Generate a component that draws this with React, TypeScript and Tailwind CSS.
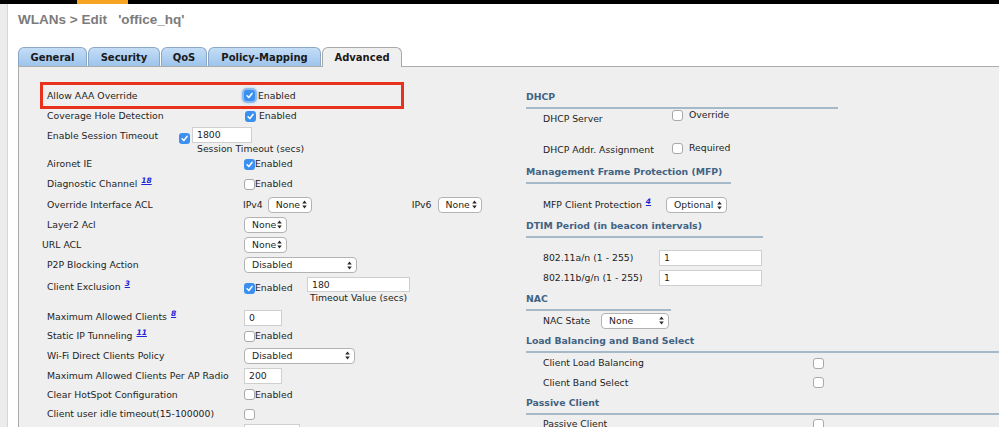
import React from "react";

function Check({ on, focus }: { on?: boolean; focus?: boolean }) {
  if (on) {
    return (
      <span
        className={
          focus
            ? "inline-flex w-[11px] h-[11px] shrink-0 items-center justify-center rounded-[3px] bg-[#3b8ff0] shadow-[0_0_0_2px_#8db8ee,0_0_3px_2px_#a9c9f2]"
            : "inline-flex w-[11px] h-[11px] shrink-0 items-center justify-center rounded-[3px] bg-[#3b8ff0]"
        }
      >
        <svg width="9" height="9" viewBox="0 0 10 10">
          <path d="M2.3 5.3 L4.3 7.3 L7.8 2.7" stroke="white" strokeWidth="1.7" fill="none" strokeLinecap="round" strokeLinejoin="round" />
        </svg>
      </span>
    );
  }
  return <span className="inline-block w-[11px] h-[11px] shrink-0 rounded-[3px] bg-white border border-[#a9a9a9]" />;
}

function Arrows() {
  return (
    <svg width="5" height="9" viewBox="0 0 5 9" className="shrink-0">
      <path d="M2.5 0.6 L4.8 3.6 H0.2 Z M2.5 8.4 L4.8 5.4 H0.2 Z" fill="#2a2a2a" />
    </svg>
  );
}

function Select({ value, cls }: { value: string; cls: string }) {
  return (
    <div className={cls + " h-[16px] rounded-[4px] border border-[#b3b3b3] bg-white flex items-center justify-between pl-[7px] pr-[4px] shrink-0"}>
      <span className="leading-none">{value}</span>
      <Arrows />
    </div>
  );
}

function Input({ value, cls }: { value: string; cls: string }) {
  return (
    <div className={cls + " bg-white border border-[#cfcfcf] flex items-center pl-[4px] shrink-0 leading-none"}>{value}</div>
  );
}

function Sup({ n }: { n: string }) {
  return <span className="ml-[4px] text-[7.5px] font-bold italic underline text-[#2323d8] align-super leading-none">{n}</span>;
}

function Row({ h, label, sup, children, url }: { h: string; label: string; sup?: string; children?: React.ReactNode; url?: boolean }) {
  return (
    <div className={h + " shrink-0 flex items-center " + (url ? "pl-[2px]" : "pl-[7px]")}>
      <div className={url ? "w-[202px] shrink-0" : "w-[197px] shrink-0"}>
        {label}
        {sup ? <Sup n={sup} /> : null}
      </div>
      <div className="flex items-center">{children}</div>
    </div>
  );
}

function Head({ cls, children }: { cls: string; children: React.ReactNode }) {
  return (
    <div className={cls + " h-[23px] shrink-0 border-b-2 border-[#a6b9c8] flex items-center font-bold text-[#3f6383]"}>{children}</div>
  );
}

export default function App() {
  return (
    <div className="w-[999px] h-[427px] overflow-hidden bg-white flex flex-col font-['DejaVu_Sans',sans-serif] text-[9.3px] text-[#1e1e1e]">
      <div className="h-[4px] bg-black flex shrink-0">
        <div className="ml-[77px] w-[51px] bg-[#f5a321]" />
      </div>
      <div className="flex flex-1 min-h-0">
        <div className="w-[8px] bg-[#ececec] border-r border-[#d6d6d6] shrink-0" />
        <div className="flex-1 flex flex-col pl-[10px] min-w-0">
          <div className="h-[32px] shrink-0 flex items-center font-['Liberation_Sans',sans-serif] font-bold text-[13.5px] text-[#7b7b7b] whitespace-pre">
            {"WLANs > Edit   'office_hq'"}
          </div>
          <div className="mt-[11px] h-[19px] shrink-0 flex items-end gap-[1px] relative z-10 font-bold text-[10px] text-[#1a1a1a]">
            <div className="w-[69px] h-[19px] rounded-t-[6px] border border-b-0 border-[#8aa8c6] bg-[linear-gradient(#c4ddf6,#9dc4ec)] flex items-center justify-center">General</div>
            <div className="w-[72px] h-[19px] rounded-t-[6px] border border-b-0 border-[#8aa8c6] bg-[linear-gradient(#c4ddf6,#9dc4ec)] flex items-center justify-center">Security</div>
            <div className="w-[46px] h-[19px] rounded-t-[6px] border border-b-0 border-[#8aa8c6] bg-[linear-gradient(#c4ddf6,#9dc4ec)] flex items-center justify-center">QoS</div>
            <div className="w-[113px] h-[19px] rounded-t-[6px] border border-b-0 border-[#8aa8c6] bg-[linear-gradient(#c4ddf6,#9dc4ec)] flex items-center justify-center">Policy-Mapping</div>
            <div className="w-[80px] h-[20px] -mb-[1px] rounded-t-[6px] border border-b-0 border-[#a8a8a8] bg-[#efefef] flex items-center justify-center pb-[1px]">Advanced</div>
          </div>
          <div className="flex-1 bg-[#efefef] border-t border-l border-[#acacac] flex min-h-0 overflow-hidden">
            {/* Left column */}
            <div className="w-[507px] shrink-0 pl-[21px] pt-[15px] flex flex-col">
              <div className="h-[27px] w-[364px] border-[3px] border-[#e8321e] flex items-center pl-[4px] shrink-0">
                <div className="w-[197px] shrink-0">Allow AAA Override</div>
                <Check on focus />
                <span className="ml-[3px]">Enabled</span>
              </div>
              <Row h="h-[14px]" label="Coverage Hole Detection">
                <span className="ml-[1px] flex items-center"><Check on /><span className="ml-[3px]">Enabled</span></span>
              </Row>
              <div className="h-[31px] flex items-start pl-[7px] shrink-0">
                <div className="w-[132px] h-[26px] flex items-center shrink-0">Enable Session Timeout</div>
                <div className="mt-[10px]"><Check on /></div>
                <div className="ml-[2px] mt-[4px] flex flex-col">
                  <Input value="1800" cls="w-[60px] h-[16px]" />
                  <div className="pl-[5px] leading-[12px]">Session Timeout (secs)</div>
                </div>
              </div>
              <Row h="h-[20px]" label="Aironet IE">
                <Check on /><span>Enabled</span>
              </Row>
              <Row h="h-[20px]" label="Diagnostic Channel" sup="18">
                <Check /><span>Enabled</span>
              </Row>
              <Row h="h-[21px]" label="Override Interface ACL">
                <span className="-ml-[1px]">IPv4</span>
                <span className="ml-[5px]"><Select value="None" cls="w-[44px]" /></span>
                <span className="ml-[100px]">IPv6</span>
                <span className="ml-[6px]"><Select value="None" cls="w-[44px]" /></span>
              </Row>
              <Row h="h-[19px]" label="Layer2 Acl">
                <Select value="None" cls="w-[43px]" />
              </Row>
              <Row h="h-[21px]" label="URL ACL" url>
                <Select value="None" cls="w-[43px]" />
              </Row>
              <Row h="h-[20px]" label="P2P Blocking Action">
                <Select value="Disabled" cls="w-[113px]" />
              </Row>
              <div className="h-[33px] flex items-start pl-[7px] shrink-0">
                <div className="w-[197px] pt-[5px] leading-[12px] shrink-0">Client Exclusion<Sup n="3" /></div>
                <div className="w-[63px] mt-[7px] h-[12px] flex items-center shrink-0"><Check on /><span>Enabled</span></div>
                <div className="mt-[2px] flex flex-col">
                  <Input value="180" cls="w-[103px] h-[15px]" />
                  <div className="pl-[3px] leading-[12px]">Timeout Value (secs)</div>
                </div>
              </div>
              <Row h="h-[19px]" label="Maximum Allowed Clients" sup="8">
                <Input value="0" cls="w-[38px] h-[16px]" />
              </Row>
              <Row h="h-[18px]" label="Static IP Tunneling" sup="11">
                <Check /><span>Enabled</span>
              </Row>
              <Row h="h-[21px]" label="Wi-Fi Direct Clients Policy">
                <Select value="Disabled" cls="w-[111px]" />
              </Row>
              <Row h="h-[19px]" label="Maximum Allowed Clients Per AP Radio">
                <Input value="200" cls="w-[38px] h-[16px]" />
              </Row>
              <Row h="h-[19px]" label="Clear HotSpot Configuration">
                <Check /><span>Enabled</span>
              </Row>
              <Row h="h-[20px]" label="Client user idle timeout(15-100000)">
                <Check />
              </Row>
              <div className="h-[20px] flex items-start pl-[204px] shrink-0">
                <Input value="" cls="w-[56px] h-[16px]" />
              </div>
            </div>
            {/* Right column */}
            <div className="flex-1 pt-[19px] flex flex-col min-w-0">
              <Head cls="w-[312px]">DHCP</Head>
              <div className="h-[31px] flex items-start pl-[17px] shrink-0">
                <div className="w-[129px] pt-[4px] leading-[12px] shrink-0">DHCP Server</div>
                <div className="h-[12px] flex items-center"><Check /><span className="ml-[6px]">Override</span></div>
              </div>
              <div className="h-[21px] flex items-start pl-[17px] shrink-0">
                <div className="w-[129px] pt-[4px] leading-[12px] shrink-0">DHCP Addr. Assignment</div>
                <div className="mt-[2px] h-[12px] flex items-center"><Check /><span className="ml-[6px]">Required</span></div>
              </div>
              <Head cls="w-[205px]">Management Frame Protection (MFP)</Head>
              <div className="mt-[11px] h-[20px] flex items-center pl-[17px] shrink-0">
                <div className="w-[123px] shrink-0">MFP Client Protection<Sup n="4" /></div>
                <Select value="Optional" cls="w-[61px]" />
              </div>
              <Head cls="w-[237px]">DTIM Period (in beacon intervals)</Head>
              <div className="mt-[10px] h-[20px] flex items-center pl-[17px] shrink-0">
                <div className="w-[116px] shrink-0">802.11a/n (1 - 255)</div>
                <Input value="1" cls="w-[103px] h-[16px]" />
              </div>
              <div className="h-[20px] flex items-center pl-[17px] shrink-0">
                <div className="w-[116px] shrink-0">802.11b/g/n (1 - 255)</div>
                <Input value="1" cls="w-[103px] h-[16px]" />
              </div>
              <Head cls="w-[145px]">NAC</Head>
              <div className="h-[19px] flex items-center pl-[17px] shrink-0">
                <div className="w-[58px] shrink-0">NAC State</div>
                <Select value="None" cls="w-[68px]" />
              </div>
              <Head cls="w-full">Load Balancing and Band Select</Head>
              <div className="h-[20px] flex items-center pl-[17px] shrink-0">
                <div className="w-[270px] shrink-0">Client Load Balancing</div>
                <Check />
              </div>
              <div className="h-[19px] flex items-center pl-[17px] shrink-0">
                <div className="w-[270px] shrink-0">Client Band Select</div>
                <Check />
              </div>
              <Head cls="w-full">Passive Client</Head>
              <div className="h-[18px] flex items-center pl-[17px] shrink-0">
                <div className="w-[270px] shrink-0">Passive Client</div>
                <Check />
              </div>
            </div>
          </div>
        </div>
      </div>
    </div>
  );
}
